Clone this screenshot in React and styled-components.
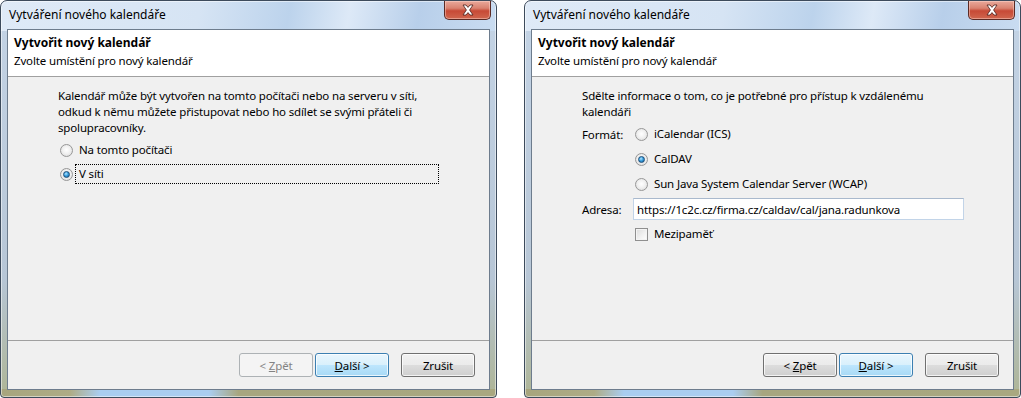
import styled, { createGlobalStyle, css } from "styled-components";

const GlobalStyle = createGlobalStyle`
  html, body {
    margin: 0;
    padding: 0;
    background: #fff;
  }
  body {
    font-family: "Noto Sans", "Segoe UI", sans-serif;
    font-size: 11.5px;
    letter-spacing: -0.15px;
    color: #000;
  }
`;

const Desktop = styled.div`
  display: flex;
  gap: 27px;
  width: 1021px;
  height: 398px;
`;

const Window = styled.div`
  width: 497px;
  height: 398px;
  box-sizing: border-box;
  display: flex;
  flex-direction: column;
  padding: 0 6px 7px;
  border: 1px solid #3d4b5c;
  border-radius: 7px 7px 4px 4px;
  background:
    linear-gradient(90deg, #a7a57d 0%, #aeac86 14%, #a9cdf0 20%, #aacdf0 42%, #a7a67f 48%, #a9a880 100%) left bottom / 100% 8px no-repeat,
    linear-gradient(100deg, #dfeaf7 0%, #d6e4f4 40%, #bcd3ec 58%, #dde9f7 70%, #b8cfea 84%, #c9dcf1 100%) left top / 100% 30px no-repeat,
    linear-gradient(180deg, #c4d4e6 0%, #b7c6d6 70%, #aeb596 100%);
  box-shadow: inset 0 0 0 1px rgba(255, 255, 255, 0.5);
`;

const TitleBar = styled.div`
  height: 28px;
  flex: none;
  display: flex;
  justify-content: space-between;
  align-items: flex-start;
`;

const Title = styled.div`
  padding: 6px 0 0 2px;
  line-height: 16px;
  font-size: 12px;
  letter-spacing: 0;
`;

const CloseButton = styled.div`
  width: 47px;
  height: 19px;
  margin-right: -1px;
  box-sizing: border-box;
  display: flex;
  align-items: center;
  justify-content: center;
  border: 1px solid #5b2a24;
  border-top: none;
  border-radius: 0 0 5px 5px;
  background: linear-gradient(180deg, #e9a99b 0%, #d98270 40%, #c74a36 55%, #d0664e 100%);
  box-shadow: inset 0 0 0 1px rgba(255, 220, 210, 0.45);
`;

const Client = styled.div`
  flex: 1;
  display: flex;
  flex-direction: column;
  border: 1px solid #6d7c8d;
  background: #f0f0f0;
`;

const Header = styled.div`
  height: 47px;
  box-sizing: border-box;
  flex: none;
  padding: 5px 6px 0;
  background: #fff;
  border-bottom: 1px solid #a0a0a0;
  line-height: 16px;
`;

const HeaderTitle = styled.div`
  font-weight: 700;
  font-size: 12px;
  letter-spacing: 0;
`;

const HeaderSubtitle = styled.div`
  margin-top: 2px;
`;

const Body = styled.div`
  flex: 1;
  padding: 11px 0 0 50px;
`;

const Paragraph = styled.p`
  margin: 0 0 4px;
  line-height: 16px;
  white-space: nowrap;
`;

const Choices = styled.div`
  display: flex;
  flex-direction: column;
  gap: 4px;
`;

const Choice = styled.label`
  display: flex;
  align-items: center;
  height: 20px;
  margin-left: 2px;
`;

const RadioDot = styled.span`
  width: 13px;
  height: 13px;
  flex: none;
  box-sizing: border-box;
  border-radius: 50%;
  border: 1px solid #979797;
  background: radial-gradient(circle at 50% 45%, #ffffff 0, #f1f1f1 45%, #d6d6d6 100%);
  display: flex;
  align-items: center;
  justify-content: center;

  &::after {
    content: "";
    display: ${(p) => (p.$checked ? "block" : "none")};
    width: 7px;
    height: 7px;
    border-radius: 50%;
    box-sizing: border-box;
    border: 1px solid #1c4d78;
    background: radial-gradient(circle at 40% 35%, #b5e6ff 0, #3aa0e0 45%, #0f5a93 100%);
  }
`;

const CheckBox = styled.span`
  width: 13px;
  height: 13px;
  flex: none;
  box-sizing: border-box;
  border: 1px solid #8f8f8f;
  background: linear-gradient(135deg, #dcdcdc 0%, #f2f2f2 60%, #ffffff 100%);
  box-shadow: inset 0 0 0 1px #f4f4f4;
`;

const ChoiceText = styled.span`
  box-sizing: border-box;
  margin-left: 2px;
  padding: 0 3px;
  height: 20px;
  line-height: 18px;
  border: 1px dotted ${(p) => (p.$focused ? "#000" : "transparent")};
  ${(p) =>
    p.$wide &&
    css`
      width: 364px;
    `}
`;

const FormRows = styled.div`
  display: flex;
  flex-direction: column;
  gap: 5px;
`;

const FormRow = styled.div`
  display: flex;
  align-items: center;
  height: 20px;
`;

const FieldLabel = styled.span`
  width: 51px;
  flex: none;
`;

const TextInput = styled.input`
  width: 331px;
  height: 22px;
  box-sizing: border-box;
  margin: -1px 0;
  padding: 0 3px;
  font: inherit;
  letter-spacing: inherit;
  color: #000;
  background: #fff;
  border: 1px solid #c2d4e8;
  border-top-color: #a9b9cd;
  outline: none;
`;

const Footer = styled.div`
  height: 49px;
  flex: none;
  box-sizing: border-box;
  display: flex;
  justify-content: flex-end;
  align-items: flex-start;
  padding: 12px 14px 0 0;
  border-top: 1px solid #a0a0a0;
`;

const Button = styled.button`
  width: 74px;
  height: 24px;
  box-sizing: border-box;
  margin-left: ${(p) => (p.$apart ? "12px" : "2px")};
  padding: 0;
  font: inherit;
  letter-spacing: inherit;
  color: #000;
  border: 1px solid #707070;
  border-radius: 3px;
  background: linear-gradient(180deg, #f2f2f2 0%, #ebebeb 49%, #dddddd 50%, #cfcfcf 100%);
  box-shadow: inset 0 0 0 1px rgba(255, 255, 255, 0.75);

  u {
    text-decoration: underline;
  }

  ${(p) =>
    p.$default &&
    css`
      border-color: #3c7fb1;
      background: linear-gradient(180deg, #eaf6fd 0%, #d9f0fc 49%, #bee6fd 50%, #a7d9f5 100%);
    `}

  ${(p) =>
    p.disabled &&
    css`
      border-color: #adb2b5;
      background: #f4f4f4;
      color: #838383;
      box-shadow: none;
    `}
`;

const CloseIcon = () => (
  <svg width="14" height="12" viewBox="0 0 14 12">
    <path
      d="M2 1h3l2 2.4L9 1h3L8.6 6 12 11H9L7 8.6 5 11H2l3.4-5z"
      fill="#fff"
      stroke="#4a1d18"
      strokeWidth="0.8"
      strokeLinejoin="round"
    />
  </svg>
);

const Radio = ({ checked, focused, wide, children }) => (
  <Choice>
    <RadioDot $checked={checked} />
    <ChoiceText $focused={focused} $wide={wide}>
      {children}
    </ChoiceText>
  </Choice>
);

const Dialog = ({ backEnabled, children }) => (
  <Window>
    <TitleBar>
      <Title>Vytváření nového kalendáře</Title>
      <CloseButton>
        <CloseIcon />
      </CloseButton>
    </TitleBar>
    <Client>
      <Header>
        <HeaderTitle>Vytvořit nový kalendář</HeaderTitle>
        <HeaderSubtitle>Zvolte umístění pro nový kalendář</HeaderSubtitle>
      </Header>
      <Body>{children}</Body>
      <Footer>
        <Button disabled={!backEnabled}>
          &lt; <u>Z</u>pět
        </Button>
        <Button $default>
          <u>D</u>alší &gt;
        </Button>
        <Button $apart>Zrušit</Button>
      </Footer>
    </Client>
  </Window>
);

export default function App() {
  return (
    <>
      <GlobalStyle />
      <Desktop>
        <Dialog backEnabled={false}>
          <Paragraph>
            Kalendář může být vytvořen na tomto počítači nebo na serveru v síti,
            <br />
            odkud k němu můžete přistupovat nebo ho sdílet se svými přáteli či
            <br />
            spolupracovníky.
          </Paragraph>
          <Choices>
            <Radio wide>Na tomto počítači</Radio>
            <Radio wide checked focused>
              V síti
            </Radio>
          </Choices>
        </Dialog>
        <Dialog backEnabled>
          <Paragraph>
            Sdělte informace o tom, co je potřebné pro přístup k vzdálenému
            <br />
            kalendáři
          </Paragraph>
          <FormRows>
            <FormRow>
              <FieldLabel>Formát:</FieldLabel>
              <Radio>iCalendar (ICS)</Radio>
            </FormRow>
            <FormRow>
              <FieldLabel />
              <Radio checked>CalDAV</Radio>
            </FormRow>
            <FormRow>
              <FieldLabel />
              <Radio>Sun Java System Calendar Server (WCAP)</Radio>
            </FormRow>
            <FormRow>
              <FieldLabel>Adresa:</FieldLabel>
              <TextInput defaultValue="https://1c2c.cz/firma.cz/caldav/cal/jana.radunkova" />
            </FormRow>
            <FormRow>
              <FieldLabel />
              <Choice>
                <CheckBox />
                <ChoiceText>Mezipaměť</ChoiceText>
              </Choice>
            </FormRow>
          </FormRows>
        </Dialog>
      </Desktop>
    </>
  );
}
